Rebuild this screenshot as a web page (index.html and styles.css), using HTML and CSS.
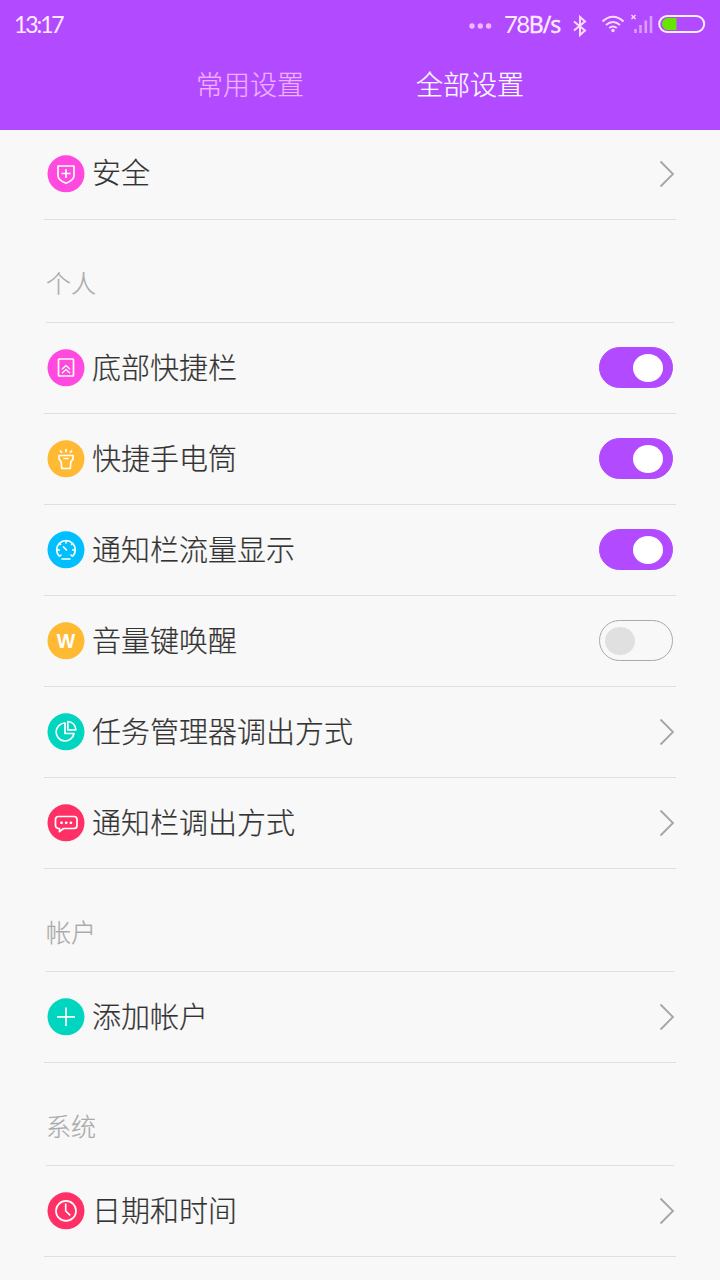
FILE: index.html
```html
<!DOCTYPE html>
<html lang="zh-CN">
<head>
<meta charset="utf-8">
<title>设置</title>
<link rel="stylesheet" href="styles.css">
</head>
<body>
<header class="header">
  <div class="status">
    <span class="clock">13:17</span>
    <div class="status-right">
      <svg class="dots" width="24" height="8" viewBox="0 0 24 8"><circle cx="3" cy="4" r="2.7"/><circle cx="11.3" cy="4" r="2.7"/><circle cx="19.6" cy="4" r="2.7"/></svg>
      <span class="speed"><span class="num">78</span><span class="unit">B/s</span></span>
      <svg class="bt" width="16" height="22" viewBox="0 0 16 22"><path d="M2 6.500l11 9-5 4.500V2l5 4.500-11 9"/></svg>
      <svg class="wifi" width="24" height="18" viewBox="0 0 24 18"><path d="M1.500 6.500q10.500-9.500 21 0M5 10q7-6 14 0M8.300 13q3.700-3 7.400 0"/><circle cx="12" cy="15.500" r="1.700"/></svg>
      <svg class="signal" width="24" height="20" viewBox="0 0 24 20"><path class="cross" d="M1.500 1l4 4M5.500 1l-4 4"/><path d="M5.500 15v4M10.500 11v8M15.800 6.500V19M21 2v17"/></svg>
      <svg class="battery" width="48" height="20" viewBox="0 0 48 20"><path class="charge" d="M18.500 4H10a6 6 0 0 0 0 12h8.500z"/><rect x="1.200" y="2" width="45" height="16" rx="8"/></svg>
    </div>
  </div>
  <nav class="tabs">
    <a class="tab">常用设置</a>
    <a class="tab active">全部设置</a>
  </nav>
</header>
<main class="list">
  <div class="row first">
    <svg class="icon pink" viewBox="0 0 38 38"><circle class="disc" cx="19" cy="18.800" r="18.500"/><path d="M11 11h16v9.500c0 4-4 6.200-8 7.800-4-1.600-8-3.800-8-7.800zM19 14v9M14.500 18.500h9"/></svg>
    <span class="label">安全</span>
    <svg class="chevron" viewBox="0 0 16 28"><path d="M1.500 1.500L14 14 1.500 26.500"/></svg>
  </div>

  <h2 class="group">个人</h2>
  <div class="row">
    <svg class="icon pink" viewBox="0 0 38 38"><circle class="disc" cx="19" cy="18.800" r="18.500"/><rect x="11.500" y="10" width="15" height="17" rx="1"/><path class="fine" d="M15 20.200l4-3.700 4 3.700M15 24.200l4-3.700 4 3.700"/></svg>
    <span class="label">底部快捷栏</span>
    <span class="toggle on"></span>
  </div>
  <div class="row">
    <svg class="icon orange" viewBox="0 0 38 38"><circle class="disc" cx="19" cy="18.800" r="18.500"/><path d="M12 15.500h14v3.500l-2.200 3-.5 6.500h-8.600l-.5-6.500L12 19zM19 9v3.300M13 10.500l2 2.300M25 10.500l-2 2.300M16.500 18.500h5"/></svg>
    <span class="label">快捷手电筒</span>
    <span class="toggle on"></span>
  </div>
  <div class="row">
    <svg class="icon blue" viewBox="0 0 38 38"><circle class="disc" cx="19" cy="18.800" r="18.500"/><path d="M12.500 25.500a9.300 9.300 0 1 1 13 0M14.500 28h9M16 15.500l4 4"/><path class="fine" d="M19 10v2.800M10 19h3M25 19h3M12.500 12.500l1.500 1.500M25.500 12.500L24 14M12.500 25.500l2-2M25.500 25.500l-2-2"/></svg>
    <span class="label">通知栏流量显示</span>
    <span class="toggle on"></span>
  </div>
  <div class="row">
    <svg class="icon orange" viewBox="0 0 38 38"><circle class="disc" cx="19" cy="18.800" r="18.500"/><text class="letter" x="19" y="26" text-anchor="middle">W</text></svg>
    <span class="label">音量键唤醒</span>
    <span class="toggle"></span>
  </div>
  <div class="row">
    <svg class="icon teal" viewBox="0 0 38 38"><circle class="disc" cx="19" cy="18.800" r="18.500"/><path d="M18 10a9 9 0 1 0 9 10.500h-9zM20.800 8.500a8.200 8.200 0 0 1 8 8.300h-8z"/></svg>
    <span class="label">任务管理器调出方式</span>
    <svg class="chevron" viewBox="0 0 16 28"><path d="M1.500 1.500L14 14 1.500 26.500"/></svg>
  </div>
  <div class="row">
    <svg class="icon red" viewBox="0 0 38 38"><circle class="disc" cx="19" cy="18.800" r="18.500"/><path d="M11.500 12.500h15.500a3 3 0 0 1 3 3v6a3 3 0 0 1-3 3H16.500l-4 3.200v-3.200h-1a3 3 0 0 1-3-3v-6a3 3 0 0 1 3-3z"/><g class="solid"><circle cx="14.500" cy="18.800" r="1.400"/><circle cx="19.200" cy="18.800" r="1.400"/><circle cx="23.900" cy="18.800" r="1.400"/></g></svg>
    <span class="label">通知栏调出方式</span>
    <svg class="chevron" viewBox="0 0 16 28"><path d="M1.500 1.500L14 14 1.500 26.500"/></svg>
  </div>

  <h2 class="group">帐户</h2>
  <div class="row">
    <svg class="icon teal" viewBox="0 0 38 38"><circle class="disc" cx="19" cy="18.800" r="18.500"/><path d="M19 9.500v18.500M10 18.800h18"/></svg>
    <span class="label">添加帐户</span>
    <svg class="chevron" viewBox="0 0 16 28"><path d="M1.500 1.500L14 14 1.500 26.500"/></svg>
  </div>

  <h2 class="group">系统</h2>
  <div class="row">
    <svg class="icon red" viewBox="0 0 38 38"><circle class="disc" cx="19" cy="18.800" r="18.500"/><circle class="ring" cx="19" cy="18.900" r="10"/><path d="M18.700 11.500v7.500l4.500 4.300"/></svg>
    <span class="label">日期和时间</span>
    <svg class="chevron" viewBox="0 0 16 28"><path d="M1.500 1.500L14 14 1.500 26.500"/></svg>
  </div>
</main>
</body>
</html>
```
FILE: styles.css
```css
* { box-sizing: border-box; }

body {
  margin: 0;
  width: 720px;
  height: 1280px;
  overflow: hidden;
  background: #f8f8f8;
  color: #333;
  font-family: "Noto Sans CJK SC Light", "Noto Sans CJK SC", sans-serif;
  font-weight: 300;
}

.header {
  height: 130px;
  background: #b24bff;
  color: #fff;
}

.status {
  display: flex;
  justify-content: space-between;
  align-items: center;
  height: 48px;
  padding: 0 14px 0 14px;
  color: #ffeaff;
}

.clock {
  font: 400 23px/48px Lato, sans-serif;
  letter-spacing: -2.1px;
}

.status-right {
  display: flex;
  align-items: center;
}

.status-right svg {
  fill: none;
  stroke: #ffdcff;
  stroke-width: 2;
}

.status-right .dots {
  margin: 4px 11px 0 0;
  fill: #f3b5ff;
  stroke: none;
}

.speed {
  display: flex;
  width: 57px;
  margin-right: 11px;
  line-height: 46px;
  white-space: nowrap;
}

.num { font-family: Lato, sans-serif; font-size: 24px; font-weight: 400; letter-spacing: -1.6px; }
.unit { font-family: "Noto Sans", sans-serif; font-size: 23px; font-weight: 400; letter-spacing: -0.9px; -webkit-text-stroke: 0.3px; }

.bt { margin: 3px 13px 0 0; }
.wifi { margin-right: 5px; }
.wifi circle { fill: #ffdcff; stroke: none; }
.status-right .signal { margin-right: 4px; stroke: #db9dff; stroke-width: 2.6; }
.signal .cross { stroke-width: 1.3; stroke: #ffdcff; }
.status-right .battery { stroke: #fff0ff; }
.battery .charge { fill: #66e500; stroke: none; }

.tabs {
  display: flex;
  justify-content: center;
  gap: 112px;
  font-size: 27px;
  line-height: 40px;
  padding-top: 16px;
}

.tab { color: #eeb0ff; -webkit-text-stroke: 0.2px; }
.tab.active { color: #fff; }

.list { padding: 0 44px; }

.row {
  display: flex;
  align-items: center;
  height: 91px;
  padding: 0 1px 0 3px;
  border-bottom: 1px solid #dfdfdf;
}

.row.first { height: 90px; padding-bottom: 2px; }

.label {
  flex: 1;
  margin-left: 7px;
  padding-bottom: 5px;
  font-size: 29px;
  line-height: 42px;
  -webkit-text-stroke: 0.2px;
}

.group {
  display: flex;
  align-items: center;
  height: 103px;
  margin: 0 2px;
  padding-top: 22px;
  border-bottom: 1px solid #dfdfdf;
  color: #a9a9a9;
  font-size: 25px;
  font-weight: 300;
  line-height: 36px;
  -webkit-text-stroke: 0.2px;
}

.icon {
  width: 38px;
  height: 38px;
  fill: none;
  stroke: #fff;
  stroke-width: 1.7;
  stroke-linejoin: round;
}

.icon .disc { stroke: none; }
.icon .fine { stroke-width: 1.3; }
.icon .solid, .icon .letter { fill: #fff; stroke: none; }
.letter { font: 700 19.5px "Liberation Sans", Arial, sans-serif; }

.pink .disc { fill: #ff49df; }
.orange .disc { fill: #ffb932; }
.blue .disc { fill: #00bfff; }
.teal .disc { fill: #00d5c0; }
.red .disc { fill: #ff3066; }

.chevron {
  width: 16px;
  height: 28px;
  fill: none;
  stroke: #a5a5a5;
  stroke-width: 1.8;
}

.toggle {
  display: flex;
  align-items: center;
  width: 74px;
  height: 41px;
  margin: 0 2px 1px 0;
  padding-left: 5px;
  border: 1px solid #aaa;
  border-radius: 21px;
}

.toggle::before {
  content: "";
  width: 30px;
  height: 28px;
  border-radius: 50%;
  background: #e0e0e0;
}

.toggle.on {
  padding-left: 33px;
  border-color: #b24bff;
  background: #b24bff;
}

.toggle.on::before { background: #fff; }
```
